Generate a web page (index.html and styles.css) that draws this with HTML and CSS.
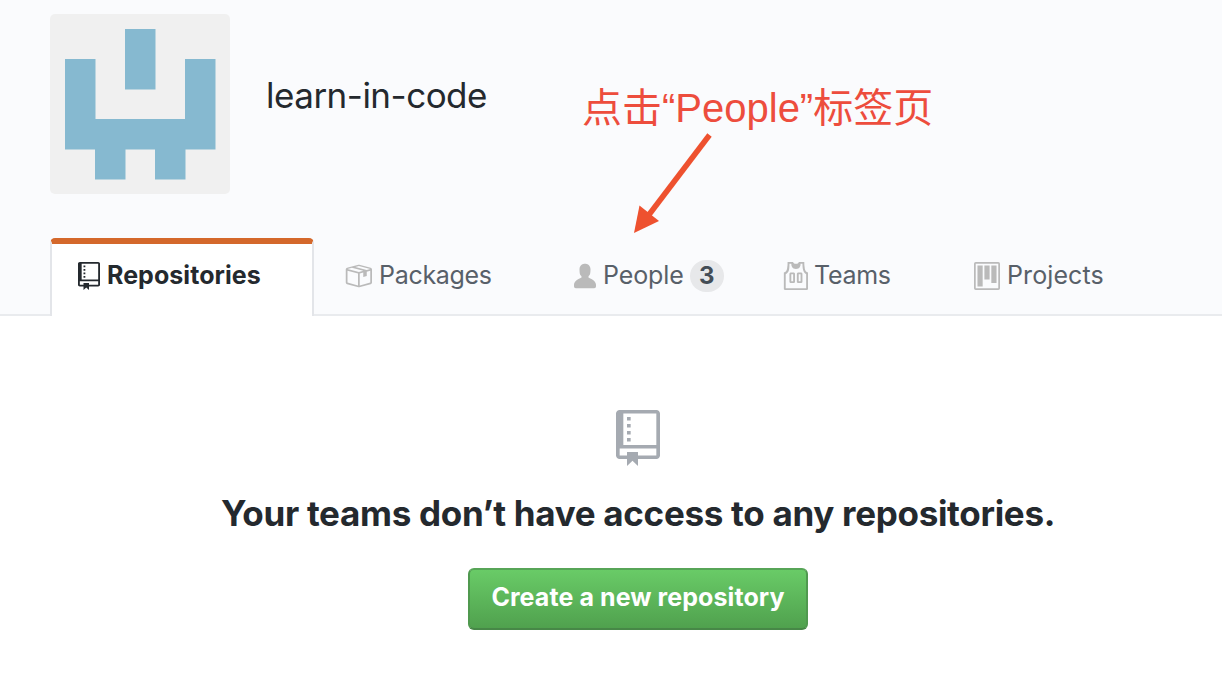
FILE: index.html
```html
<!DOCTYPE html>
<html lang="en">
<head>
<meta charset="utf-8">
<title>learn-in-code</title>
<link rel="stylesheet" href="styles.css">
</head>
<body>
<header class="orghead">
  <div class="profile">
    <svg class="avatar" viewBox="0 0 180 180" aria-hidden="true">
      <rect width="180" height="180" rx="5" fill="#f0f0f0"/>
      <path fill="#86b9d0" d="M75 15h30.500v60.500H75zM15 45h30.500v60h89.500V45h30.500v90.500h-30v30H105v-30H75.500v30H45v-30H15z"/>
    </svg>
    <h1 class="org-name">learn-in-code</h1>
  </div>
  <nav class="tabs">
    <a class="tab selected">
      <svg class="icon" width="22" height="28" viewBox="0 0 12 16" preserveAspectRatio="none"><path d="M4 9H3V8h1v1zm0-3H3v1h1V6zm0-2H3v1h1V4zm0-2H3v1h1V2zm8-1v12c0 .55-.45 1-1 1H6v2l-1.500-1.500L3 16v-2H1c-.55 0-1-.45-1-1V1c0-.55.45-1 1-1h10c.55 0 1 .45 1 1zm-1 10H1v2h2v-1h3v1h5v-2zm0-10H2v9h9V1z"/></svg>
      <span class="label repositories">Repositories</span>
    </a>
    <a class="tab">
      <svg class="icon" width="28" height="28" viewBox="0 0 16 16"><path d="M1 4.270v7.470c0 .45.3.84.75.97l6.500 1.730c.16.05.34.05.5 0l6.500-1.730c.45-.13.75-.52.75-.97V4.270c0-.45-.3-.84-.75-.97l-6.500-1.740a1.400 1.400 0 0 0-.5 0L1.750 3.300c-.45.13-.75.52-.75.97zm7 9.090l-6-1.590V5l6 1.610v6.750zM2 4l2.500-.67L11 5.060l-2.500.67L2 4zm13 7.770l-6 1.590V6.610l2-.55V8.500l2-.53V5.530L15 5v6.770zm-2-7.240L6.500 2.800l2-.53L15 4l-2 .53z"/></svg>
      <span class="label packages">Packages</span>
    </a>
    <a class="tab">
      <svg class="icon" width="22" height="28" viewBox="0 0 12 16" preserveAspectRatio="none"><path d="M12 14.002a.998.998 0 0 1-.998.998H1.001A1 1 0 0 1 0 13.999V13c0-2.633 4-4 4-4s.229-.409 0-1c-.841-.62-.944-1.590-1-4 .173-2.413 1.867-3 3-3s2.827.586 3 3c-.056 2.410-.159 3.380-1 4-.229.59 0 1 0 1s4 1.367 4 4v1.002z"/></svg>
      <span class="label people">People</span>
      <span class="counter">3</span>
    </a>
    <a class="tab">
      <svg class="icon jersey" width="26" height="28" viewBox="0 0 14 16" preserveAspectRatio="none"><path d="M4.500 6l-.5.5v5l.5.5h2l.5-.5v-5L6.500 6h-2zM6 11H5V7h1v4zm6.270-7.250C12.050 2.370 11.960 1.120 12 0H9.020c0 .27-.13.48-.39.69-.25.2-.63.3-1.130.3-.5 0-.88-.09-1.130-.3-.23-.2-.36-.42-.37-.69H3c.05 1.130-.03 2.380-.25 3.750C2.550 5.130 1.950 5.880 1 6v9.500l.5.5h12l.5-.5V6c-.95-.13-1.530-.88-1.750-2.250h.02zM13 15H2V7c.89-.5 1.480-1.250 1.720-2.250S4.030 2.500 4 1h1c-.02.78.16 1.470.52 2.060.36.58 1.020.89 2 .94.98-.02 1.640-.33 2-.94.36-.59.5-1.280.48-2.060h1c.02 1.420.13 2.550.33 3.380.2.81.69 2 1.670 2.630V15zM8.500 6l-.5.5v5l.5.5h2l.5-.5v-5l-.5-.5h-2zm1.500 5H9V7h1v4z"/></svg>
      <span class="label teams">Teams</span>
    </a>
    <a class="tab">
      <svg class="icon" width="26" height="28" viewBox="0 0 15 16" preserveAspectRatio="none"><path fill-rule="evenodd" d="M10 12h3V2h-3v10zm-4-2h3V2H6v8zm-4 4h3V2H2v12zm-1 1h13V1H1v14zM14 0H1a1 1 0 0 0-1 1v14a1 1 0 0 0 1 1h13a1 1 0 0 0 1-1V1a1 1 0 0 0-1-1z"/></svg>
      <span class="label projects">Projects</span>
    </a>
  </nav>
</header>
<main class="blankslate">
  <svg class="blank-icon" viewBox="0 0 12 16" preserveAspectRatio="none"><path d="M4 9H3V8h1v1zm0-3H3v1h1V6zm0-2H3v1h1V4zm0-2H3v1h1V2zm8-1v12c0 .55-.45 1-1 1H6v2l-1.500-1.500L3 16v-2H1c-.55 0-1-.45-1-1V1c0-.55.45-1 1-1h10c.55 0 1 .45 1 1zm-1 10H1v2h2v-1h3v1h5v-2zm0-10H2v9h9V1z"/></svg>
  <h2 class="blank-title">Your teams don’t have access to any repositories.</h2>
  <button class="create">Create a new repository</button>
</main>
<div class="note">点击<span class="latin">“People”</span>标签页</div>
<svg class="arrow" width="84" height="104" viewBox="0 0 84 104"><path d="M79.500 5L18 86" stroke="#ee512f" stroke-width="5.500" fill="none"/><path fill="#ee512f" d="M4 103L9.500 75.500 29 91z"/></svg>
</body>
</html>
```
FILE: styles.css
```css
* { box-sizing: border-box; }
body {
  margin: 0;
  height: 698px;
  overflow: hidden;
  background: #fff;
  color: #24292e;
  font-family: Inter, "Liberation Sans", sans-serif;
}
.orghead {
  height: 316px;
  padding-top: 14px;
  background: #fafbfd;
  border-bottom: 2px solid #e9ebee;
}
.profile {
  display: flex;
  height: 224px;
  padding-left: 50px;
}
.avatar { width: 180px; height: 180px; }
.org-name {
  margin: 59px 0 0 36px;
  font-size: 35px;
  line-height: 44px;
  font-weight: 400;
  letter-spacing: -0.5px;
  white-space: nowrap;
}
.tabs {
  display: grid;
  grid-template-columns: 264px 230px 208px 192px auto;
  height: 78px;
  padding-left: 50px;
}
.tab {
  display: flex;
  align-items: flex-start;
  height: 78px;
  padding: 24px 0 0 30px;
  color: #586069;
  font-size: 25px;
  line-height: 26px;
  white-space: nowrap;
}
.tab.selected {
  padding: 18px 0 0 26px;
  background: #fff;
  color: #24292e;
  font-weight: 700;
  border: 2px solid #e3e5e9;
  border-top: 6px solid #d4682b;
  border-bottom: 0;
  border-radius: 5px 5px 0 0;
}
.icon { flex: none; fill: #bababa; }
.jersey { margin-right: -1px; }
.selected .icon { fill: #24292e; }
.label { margin-left: 7px; }
.repositories { letter-spacing: 0.05px; }
.packages, .teams { letter-spacing: -0.3px; }
.people { letter-spacing: -0.1px; }
.projects { letter-spacing: 0.1px; }
.counter {
  width: 34px;
  height: 32px;
  margin: -2px 0 0 6px;
  border-radius: 16px;
  background: #e7e8ea;
  color: #444d56;
  font-size: 24px;
  line-height: 32px;
  font-weight: 700;
  text-align: center;
}
.blankslate {
  display: flex;
  flex-direction: column;
  align-items: center;
  padding: 94px 0 0 54px;
}
.blank-icon { width: 44px; height: 56px; fill: #a5aab1; }
.blank-title {
  margin: 23px 0 0;
  font-size: 35px;
  line-height: 48px;
  font-weight: 700;
  letter-spacing: -0.3px;
  white-space: nowrap;
}
.create {
  width: 340px;
  height: 62px;
  margin-top: 31px;
  padding: 0 0 4px;
  border: 2px solid;
  border-color: #57a557 #50994f #478747;
  border-radius: 6px;
  background: linear-gradient(#69cb67, #50a14e);
  color: #fff;
  font: 700 25px/28px Inter, "Liberation Sans", sans-serif;
  letter-spacing: 0.08px;
  white-space: nowrap;
}
/* Callout drawn over the page header */
.note {
  position: absolute;
  left: 582px;
  top: 77px;
  color: #ed4d3d;
  font: 400 40px/56px "Noto Sans CJK SC", sans-serif;
  white-space: nowrap;
}
.latin { font-family: "Liberation Sans", sans-serif; }
.arrow { position: absolute; left: 630px; top: 130px; }
```
